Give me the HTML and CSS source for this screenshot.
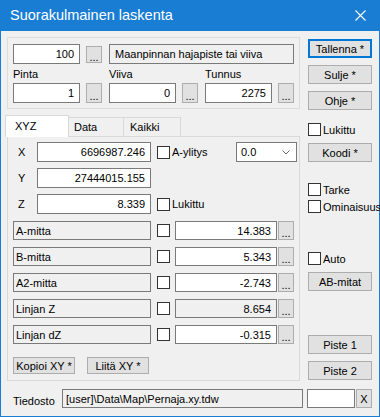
FILE: index.html
```html
<!DOCTYPE html>
<html lang="fi">
<head>
    <meta charset="UTF-8">
    <title>Suorakulmainen laskenta</title>
    <link rel="stylesheet" href="styles.css">
</head>
<body>
<div class="window">
    <div class="titlebar">
        <span class="title">Suorakulmainen laskenta</span>
        <svg class="close" width="11" height="11" viewBox="0 0 11 11">
            <path d="M0.5 0.5 L10.5 10.5 M10.5 0.5 L0.5 10.5" stroke="#fff" stroke-width="1.1" fill="none"/>
        </svg>
    </div>

    <div class="client">
        <div class="main">
            <div class="left">
                <div class="group">
                    <div class="group-grid">
                        <div class="pair">
                            <div class="edit num">100</div>
                            <div class="btn dots small">...</div>
                        </div>
                        <div class="edit ro desc">Maanpinnan hajapiste tai viiva</div>

                        <div class="field">
                            <div class="caption">Pinta</div>
                            <div class="pair">
                                <div class="edit num">1</div>
                                <div class="btn dots">...</div>
                            </div>
                        </div>
                        <div class="field">
                            <div class="caption">Viiva</div>
                            <div class="pair">
                                <div class="edit num">0</div>
                                <div class="btn dots">...</div>
                            </div>
                        </div>
                        <div class="field">
                            <div class="caption">Tunnus</div>
                            <div class="pair">
                                <div class="edit num">2275</div>
                                <div class="btn dots">...</div>
                            </div>
                        </div>
                    </div>
                </div>

                <div class="tabs">
                    <div class="tab-strip">
                        <div class="tab active">XYZ</div>
                        <div class="tab tab-data">Data</div>
                        <div class="tab tab-all">Kaikki</div>
                    </div>
                    <div class="tab-panel">
                        <div class="row coord">
                            <span class="axis">X</span>
                            <div class="edit num wide">6696987.246</div>
                            <label class="check"><span class="box"></span>A-ylitys</label>
                            <div class="combo">0.0
                                <svg width="8" height="5" viewBox="0 0 8 5"><path d="M0.5 0.5 L4 4 L7.5 0.5" stroke="#666" fill="none"/></svg>
                            </div>
                        </div>
                        <div class="row coord">
                            <span class="axis">Y</span>
                            <div class="edit num wide">27444015.155</div>
                        </div>
                        <div class="row coord">
                            <span class="axis">Z</span>
                            <div class="edit num wide">8.339</div>
                            <label class="check"><span class="box"></span>Lukittu</label>
                        </div>

                        <div class="row measure first">
                            <div class="edit ro name">A-mitta</div>
                            <span class="box"></span>
                            <div class="edit num value">14.383</div>
                            <div class="btn dots">...</div>
                        </div>
                        <div class="row measure">
                            <div class="edit ro name">B-mitta</div>
                            <span class="box"></span>
                            <div class="edit num value">5.343</div>
                            <div class="btn dots">...</div>
                        </div>
                        <div class="row measure">
                            <div class="edit ro name">A2-mitta</div>
                            <span class="box"></span>
                            <div class="edit num value">-2.743</div>
                            <div class="btn dots">...</div>
                        </div>
                        <div class="row measure">
                            <div class="edit ro name">Linjan Z</div>
                            <span class="box"></span>
                            <div class="edit num ro value">8.654</div>
                            <div class="btn dots">...</div>
                        </div>
                        <div class="row measure">
                            <div class="edit ro name">Linjan dZ</div>
                            <span class="box"></span>
                            <div class="edit num value">-0.315</div>
                            <div class="btn dots">...</div>
                        </div>

                        <div class="row copy">
                            <div class="btn copy-btn">Kopioi XY *</div>
                            <div class="btn copy-btn">Liitä XY *</div>
                        </div>
                    </div>
                </div>
            </div>

            <div class="right">
                <div class="btn side default">Tallenna *</div>
                <div class="btn side">Sulje *</div>
                <div class="btn side">Ohje *</div>
                <label class="check side-check lock"><span class="box"></span>Lukittu</label>
                <div class="btn side">Koodi *</div>
                <label class="check side-check tarke"><span class="box"></span>Tarke</label>
                <label class="check side-check prop"><span class="box"></span>Ominaisuus</label>
                <label class="check side-check auto"><span class="box"></span>Auto</label>
                <div class="btn side">AB-mitat</div>
                <div class="btn side piste1">Piste 1</div>
                <div class="btn side">Piste 2</div>
            </div>
        </div>

        <div class="file-row">
            <span class="file-label">Tiedosto</span>
            <div class="edit ro file">[user]\Data\Map\Pernaja.xy.tdw</div>
            <div class="edit blank"></div>
            <div class="btn clear">X</div>
        </div>
    </div>
</div>
</body>
</html>
```

FILE: styles.css
```css
* {
    box-sizing: border-box;
}

body {
    margin: 0;
    font-family: "Liberation Sans", Arial, sans-serif;
    font-size: 11px;
    color: #000;
    background: #fff;
}

.window {
    width: 380px;
    height: 417px;
    border: 1px solid #1a7dd4;
    border-top: none;
    background: #f0f0f0;
}

.titlebar {
    height: 31px;
    background: #1a7dd4;
    color: #fff;
    display: flex;
    align-items: center;
    padding: 0 9px 1px 9px;
}

.title {
    font-size: 14.5px;
    flex: 1;
}

.close {
    margin-right: 4px;
}

.client {
    padding: 6px 7px 0 6px;
}

.main {
    display: grid;
    grid-template-columns: 293px 64px;
    column-gap: 8px;
    height: 344px;
}

/* common controls */
.edit {
    height: 20px;
    border: 1px solid #7a7a7a;
    background: #fff;
    display: flex;
    align-items: center;
    padding: 0 5px;
    white-space: nowrap;
    overflow: hidden;
}
.edit.num {
    justify-content: flex-end;
}
.edit.ro {
    background: #f0f0f0;
}

.btn {
    background: #e1e1e1;
    border: 1px solid #adadad;
    display: flex;
    align-items: center;
    justify-content: center;
    white-space: nowrap;
}

.dots {
    width: 16px;
    height: 20px;
    padding-top: 5px;
}
.dots.small {
    height: 17px;
}

.box {
    display: inline-block;
    width: 13px;
    height: 13px;
    border: 1px solid #333;
    background: #fff;
    flex: none;
}

.check {
    display: flex;
    align-items: center;
    gap: 2px;
    white-space: nowrap;
}

/* top group */
.group {
    height: 72px;
    border: 1px solid #dcdcdc;
    padding: 6px 5px 0 5px;
}

.group-grid {
    display: grid;
    grid-template-columns: 89px 89px 89px;
    column-gap: 7px;
}

.pair {
    display: flex;
    align-items: center;
    justify-content: space-between;
}
.pair .edit {
    width: 67px;
}

.desc {
    grid-column: span 2;
}

.caption {
    height: 15px;
    margin-top: 3px;
    margin-bottom: 1px;
    line-height: 15px;
}

/* tabs */
.tabs {
    margin-top: 6px;
}

.tab-strip {
    display: flex;
    align-items: flex-end;
    height: 21px;
}

.tab {
    height: 19px;
    border: 1px solid #d9d9d9;
    border-bottom: none;
    background: #f0f0f0;
    padding-left: 6px;
    line-height: 18px;
}
.tab.active {
    position: relative;
    z-index: 1;
    height: 22px;
    width: 64px;
    margin: 0 -2px -1px -2px;
    background: #fff;
    padding-left: 9px;
    line-height: 20px;
}
.tab-data {
    width: 57px;
}
.tab-all {
    width: 58px;
    margin-left: -1px;
}

.tab-panel {
    border: 1px solid #d9d9d9;
    padding: 5px 2px 6px 5px;
    display: flex;
    flex-direction: column;
}

.row {
    display: flex;
    align-items: center;
}

.coord {
    height: 20px;
    margin-bottom: 6px;
}
.axis {
    width: 24px;
    padding-left: 5px;
}
.wide {
    width: 114px;
}
.coord .check {
    margin-left: 6px;
}

.combo {
    margin-left: auto;
    width: 61px;
    height: 20px;
    border: 1px solid #7a7a7a;
    background: #fff;
    display: flex;
    align-items: center;
    justify-content: space-between;
    padding: 0 6px 0 4px;
}

.measure {
    height: 19px;
    margin-bottom: 7px;
}
.measure.first {
    margin-top: 1px;
}
.measure .edit,
.measure .dots {
    height: 19px;
}
.name {
    width: 138px;
    padding-left: 2px;
}
.measure .box {
    margin-left: 6px;
}
.value {
    width: 102px;
    margin-left: 5px;
    margin-right: 1px;
}

.copy {
    margin-top: 6px;
    gap: 12px;
}
.copy-btn {
    width: 62px;
    height: 17px;
}

/* right column */
.right {
    display: flex;
    flex-direction: column;
}

.side {
    height: 19px;
    margin-top: 7px;
}
.side.default {
    margin-top: 2px;
    border: 2px solid #0078d7;
}

.side-check {
    height: 13px;
}
.lock {
    margin-top: 13px;
}
.tarke {
    margin-top: 21px;
}
.prop {
    margin-top: 4px;
}
.auto {
    margin-top: 39px;
}
.piste1 {
    margin-top: 44px;
}

/* bottom row */
.file-row {
    display: flex;
    align-items: center;
    margin-top: 8px;
    height: 19px;
}

.file-label {
    width: 55px;
    padding-left: 6px;
    padding-top: 4px;
}

.file {
    width: 241px;
    height: 19px;
    padding-left: 3px;
}

.blank {
    width: 48px;
    height: 19px;
    margin-left: 4px;
}

.clear {
    width: 16px;
    height: 19px;
    margin-left: 1px;
}
```
